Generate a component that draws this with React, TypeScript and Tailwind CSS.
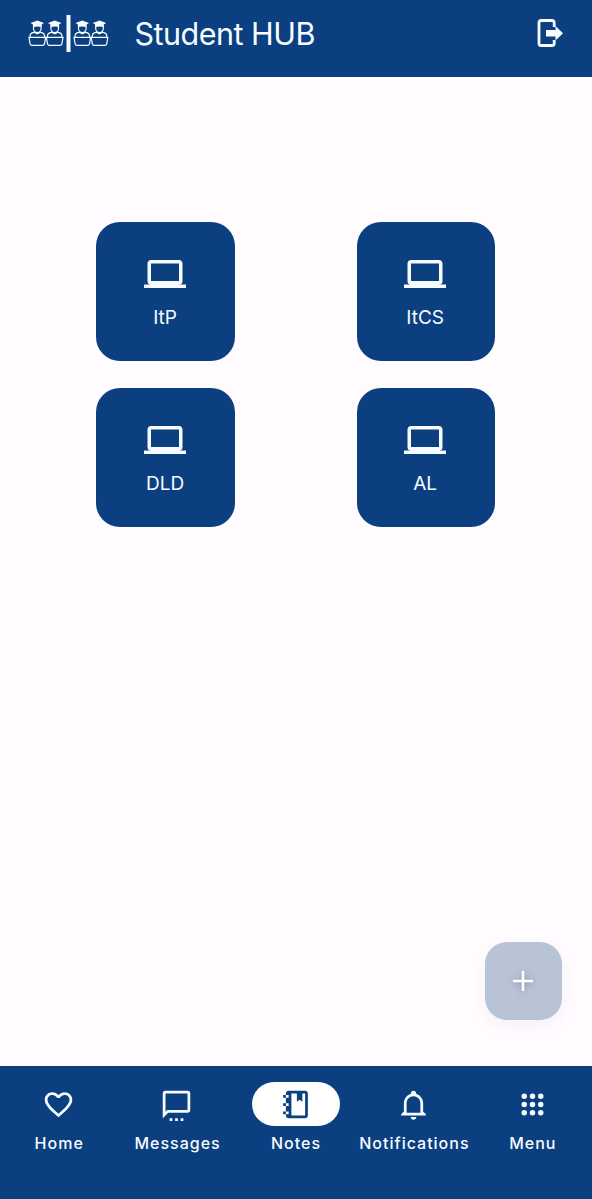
import React from "react";

type IconProps = { d: string; className?: string };

const icons = {
  laptop:
    "M4,6H20V16H4M20,18A2,2 0 0,0 22,16V6C22,4.89 21.1,4 20,4H4C2.89,4 2,4.89 2,6V16A2,2 0 0,0 4,18H0V20H24V18H20Z",
  heart:
    "M12.1,18.55L12,18.65L11.89,18.55C7.14,14.24 4,11.39 4,8.5C4,6.5 5.5,5 7.5,5C9.04,5 10.54,6 11.07,7.36H12.93C13.46,6 14.96,5 16.5,5C18.5,5 20,6.5 20,8.5C20,11.39 16.86,14.24 12.1,18.55M16.5,3C14.76,3 13.09,3.81 12,5.08C10.91,3.81 9.24,3 7.5,3C4.42,3 2,5.41 2,8.5C2,12.27 5.4,15.36 10.55,20.03L12,21.35L13.45,20.03C18.6,15.36 22,12.27 22,8.5C22,5.41 19.58,3 16.5,3Z",
  message:
    "M20,2H4A2,2 0 0 0 2,4V22L6,18H20A2,2 0 0 0 22,16V4A2,2 0 0 0 20,2M20,16H5.2L4,17.2V4H20V16M7,22H9V24H7ZM11,22H13V24H11ZM15,22H17V24H15Z",
  notebook:
    "M3,7V5H5V4C5,2.89 5.9,2 7,2H19C20.05,2 21,2.95 21,4V20C21,21.05 20.05,22 19,22H7C5.95,22 5,21.05 5,20V19H3V17H5V13H3V11H5V7H3M9,4V20H19V4H17V10L15,8.5L13,10V4H9M5,5V7H7V5H5M5,11V13H7V11H5M5,17V19H7V17H5Z",
  bell:
    "M10 21H14C14 22.1 13.1 23 12 23S10 22.1 10 21M21 19V20H3V19L5 17V11C5 7.9 7 5.2 10 4.3V4C10 2.9 10.9 2 12 2S14 2.9 14 4V4.3C17 5.2 19 7.9 19 11V17L21 19M17 11C17 8.2 14.8 6 12 6S7 8.2 7 11V18H17V11Z",
  grid:
    "M4,6a2,2 0 1 0 4,0a2,2 0 1 0-4,0M10,6a2,2 0 1 0 4,0a2,2 0 1 0-4,0M16,6a2,2 0 1 0 4,0a2,2 0 1 0-4,0M4,12a2,2 0 1 0 4,0a2,2 0 1 0-4,0M10,12a2,2 0 1 0 4,0a2,2 0 1 0-4,0M16,12a2,2 0 1 0 4,0a2,2 0 1 0-4,0M4,18a2,2 0 1 0 4,0a2,2 0 1 0-4,0M10,18a2,2 0 1 0 4,0a2,2 0 1 0-4,0M16,18a2,2 0 1 0 4,0a2,2 0 1 0-4,0",
};

function Icon({ d, className }: IconProps) {
  return (
    <svg viewBox="0 0 24 24" fill="currentColor" fillRule="evenodd" className={className} aria-hidden="true">
      <path d={d} />
    </svg>
  );
}

function Student({ x }: { x: number }) {
  return (
    <g transform={`translate(${x} 0)`}>
      <path d="M1.8 8 8.5 5.5 15.200 8l-2.300 1.500v2.700q-4.400-1.200-8.800 0V9.500z" fill="currentColor" stroke="none" />
      <path d="M4.700 12v1.500a3.800 4 0 0 0 7.600 0V12M1.200 22c-.2-3 1.400-4.400 4-4.700l3.300 1.600 3.300-1.600c2.600.3 4.200 1.700 4 4.700" />
      <path d="M.2 22.300h16.600l-1.100 6.500a2 2 0 0 1-1.900 1.500H3.200a2 2 0 0 1-1.900-1.500z" />
    </g>
  );
}

function Logo() {
  return (
    <svg viewBox="0 0 82 38" className="h-[38px] w-[82px]" fill="none" stroke="currentColor" strokeWidth="1.200" aria-hidden="true">
      <Student x={0.8} />
      <Student x={18.2} />
      <path d="M40.5 0v37" strokeWidth="4" />
      <Student x={45.8} />
      <Student x={63} />
    </svg>
  );
}

const courses = ["ItP", "ItCS", "DLD", "AL"];

const tabs = [
  { label: "Home", icon: icons.heart },
  { label: "Messages", icon: icons.message },
  { label: "Notes", icon: icons.notebook, active: true },
  { label: "Notifications", icon: icons.bell },
  { label: "Menu", icon: icons.grid },
];

export default function App() {
  return (
    <div className="relative flex h-[1199px] w-full flex-col bg-[#fffbff] font-['Inter',sans-serif] text-[#f6fcff]">
      <header className="flex h-[77px] shrink-0 items-start bg-[#0b3f80] pr-7 pl-7">
        <div className="mt-[15px]">
          <Logo />
        </div>
        <h1 className="mt-[14px] ml-[24.5px] text-[30.5px] leading-10 font-normal tracking-[-0.5px] whitespace-nowrap">Student HUB</h1>
        <button aria-label="Log out" className="mt-[18px] ml-auto">
          <svg viewBox="0 0 28 30" className="h-[30px] w-[28px]" fill="none" aria-hidden="true">
            <path d="M18.200 9V4.500a2 2 0 0 0-2-2H5a2 2 0 0 0-2 2v21a2 2 0 0 0 2 2h11.200a2 2 0 0 0 2-2V22" stroke="currentColor" strokeWidth="2.800" />
            <path d="M10 12h9.500V8l7.500 7.200-7.500 7.200v-4H10z" fill="currentColor" />
          </svg>
        </button>
      </header>

      <main className="flex-1 pt-[145.4px]">
        <div className="ml-[96.400px] grid w-[398.500px] grid-cols-[138.400px_138.400px] justify-between gap-y-[27.500px]">
          {courses.map((name) => (
            <button key={name} className="flex h-[138.400px] flex-col items-center rounded-[24px] bg-[#0b3f80] pt-[30.500px] pr-px">
              <Icon d={icons.laptop} className="size-[42px]" />
              <span className="mt-[9px] text-[19px] leading-7">{name}</span>
            </button>
          ))}
        </div>
      </main>

      <button
        aria-label="Add"
        className="absolute top-[942.400px] right-[30px] flex size-[77.400px] items-center justify-center rounded-[22px] bg-[#b8c3d5] text-white shadow-[0_6px_16px_rgba(60,50,80,0.05)]"
      >
        <svg viewBox="0 0 20 20" className="size-5 drop-shadow-[0_1px_3px_rgba(60,70,90,0.4)]" stroke="currentColor" strokeWidth="2.6" aria-hidden="true">
          <path d="M10 0v20M0 10h20" />
        </svg>
      </button>

      <nav className="grid h-[133.500px] shrink-0 grid-cols-5 bg-[#0b3f80] pt-[16.500px]">
        {tabs.map(({ label, icon, active }) => (
          <button key={label} className="flex flex-col items-center justify-start">
            <span className={active ? "flex h-11 w-[88px] items-center justify-center rounded-full bg-white text-[#0b3f80]" : "flex h-11 w-[88px] items-center justify-center pr-[1.500px]"}>
              <Icon d={icon} className="size-[33px]" />
            </span>
            <span className="mt-[5px] text-base leading-6 font-medium tracking-[1px] whitespace-nowrap">{label}</span>
          </button>
        ))}
      </nav>
    </div>
  );
}
